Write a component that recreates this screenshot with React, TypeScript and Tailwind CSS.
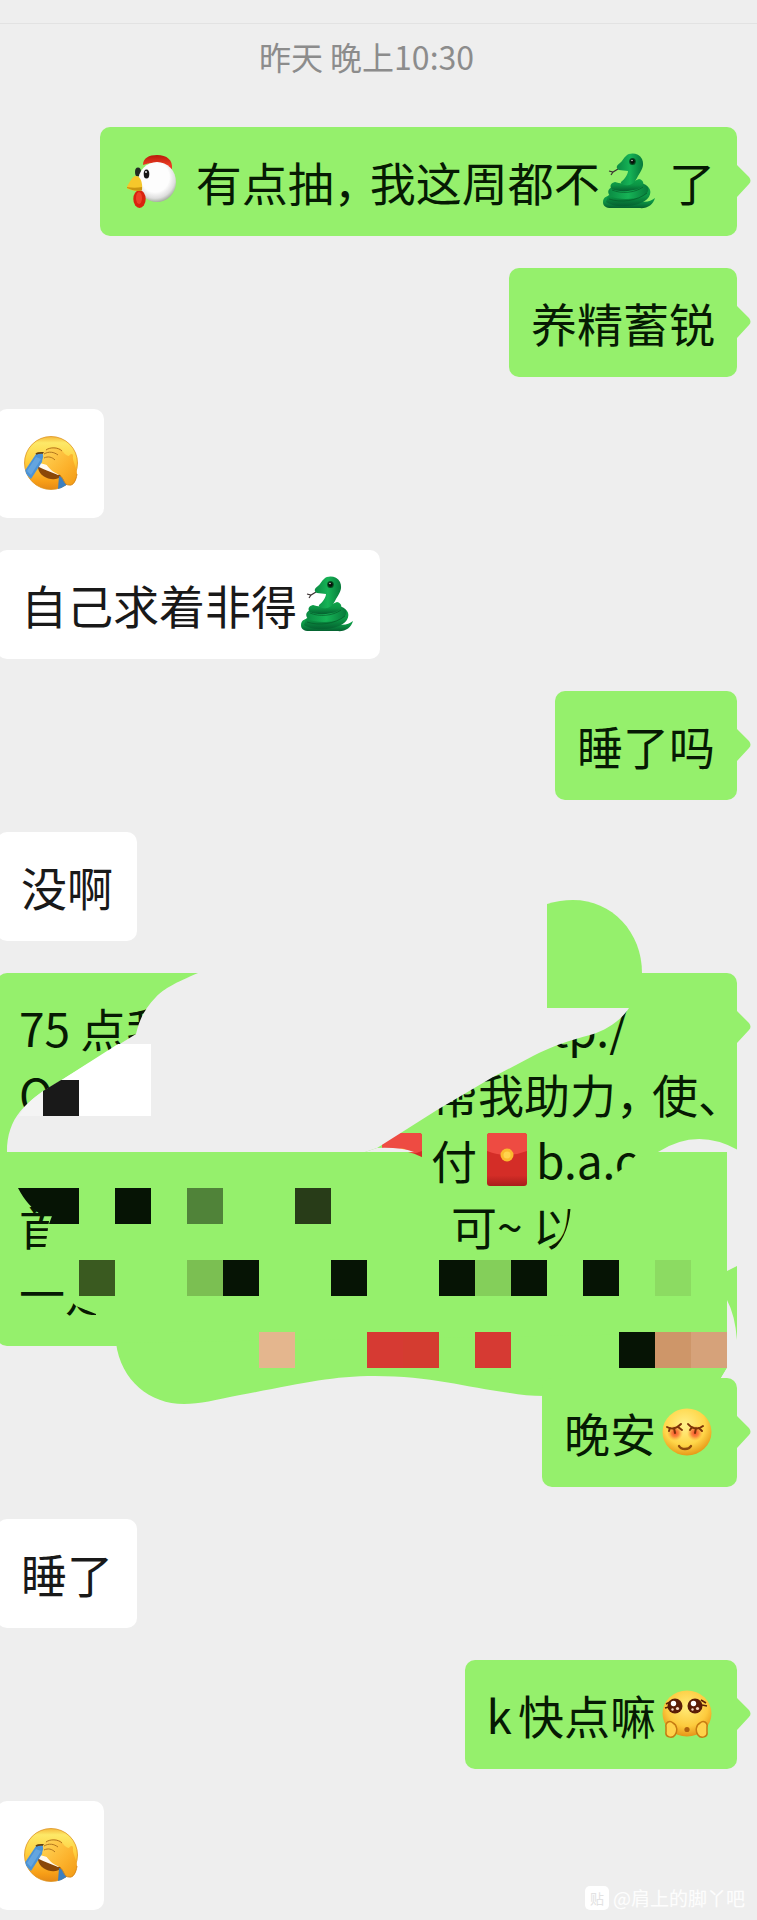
import type { ReactNode } from "react";

function Chicken() {
  return (
    <svg viewBox="0 0 50 54" className="h-[54px] w-[50px]" role="img" aria-label="鸡">
      <defs>
        <radialGradient id="ck-head" cx="0.45" cy="0.38" r="0.62">
          <stop offset="0.6" stopColor="#fdfdfd" />
          <stop offset="0.85" stopColor="#dedede" />
          <stop offset="1" stopColor="#a9b0a4" />
        </radialGradient>
        <linearGradient id="ck-comb" x1="0" y1="0" x2="0" y2="1">
          <stop offset="0" stopColor="#b81a0a" />
          <stop offset="0.7" stopColor="#ea3a22" />
        </linearGradient>
      </defs>
      <ellipse cx="11" cy="18" rx="3" ry="4.500" fill="#222b22" />
      <path d="M16 11 C16 4 22 1 30 1 C40 1 46 6 45 15 L38 13 C30 8 24 8 16 11Z" fill="url(#ck-comb)" />
      <ellipse cx="30" cy="28" rx="19" ry="20" fill="url(#ck-head)" />
      <ellipse cx="19.500" cy="20" rx="2.800" ry="4.500" fill="#161616" />
      <circle cx="19" cy="18" r="0.900" fill="#fff" />
      <ellipse cx="12.500" cy="45" rx="6.200" ry="9" fill="#d9230f" />
      <ellipse cx="12" cy="44" rx="3" ry="6" fill="#ee4028" />
      <path d="M8 22 C13 21 16 28 15 36 C10 38 4 36 -1 34 C2 30 4 24 8 22Z" fill="#f6c72b" />
      <path d="M0 33 C5 34 10 34 15 33 L15 36 C10 38 5 36 0 34Z" fill="#c99411" />
    </svg>
  );
}

function Snake() {
  return (
    <svg viewBox="0 0 52 56" className="h-14 w-[52px]" role="img" aria-label="蛇">
      <defs>
        <linearGradient id="sn-a" x1="0" y1="0" x2="0" y2="1">
          <stop offset="0" stopColor="#10a54c" />
          <stop offset="0.5" stopColor="#0b9544" />
          <stop offset="1" stopColor="#056030" />
        </linearGradient>
        <linearGradient id="sn-b" x1="0" y1="0" x2="1" y2="0">
          <stop offset="0" stopColor="#0b8b43" />
          <stop offset="0.5" stopColor="#16b356" />
          <stop offset="1" stopColor="#077a3a" />
        </linearGradient>
      </defs>
      <path d="M15 16 L10 19 L6 18 M10 19 L8 22" fill="none" stroke="#3c3232" strokeWidth="1.200" />
      <path d="M52 45 C50 52 44 56 36 55 L8 55 C3 55 0 53 0 49 C0 44 5 42 10 42 L36 48 C43 50 48 48 52 45Z" fill="url(#sn-a)" />
      <path d="M5 43 C8 40 22 44 32 42 C39 40 43 37 44 33 C50 37 48 46 38 50 C26 55 10 54 3 49Z" fill="url(#sn-a)" />
      <path d="M9 34 C16 36 28 35 39 30 L43 32 C47 35 46 40 40 43 C31 47 14 47 7 43 C4 39 5 36 9 34Z" fill="url(#sn-b)" />
      <path d="M12 29 C20 32 30 29 36 26 C41 27 42 32 37 35 C28 39 15 39 9 36 C6 33 8 30 12 29Z" fill="url(#sn-a)" />
      <path d="M23 3 C27 -1 36 0 39 6 C42 13 38 18 35 23 C33 27 31 31 26 32 C21 33 17 31 18 29 C22 26 25 21 25 18 L16 17 C12 15 14 12 17 10 C20 8 20 5 23 3Z" fill="url(#sn-b)" />
      <ellipse cx="29.500" cy="8.500" rx="3.300" ry="3.600" fill="#064a20" />
      <circle cx="29.500" cy="8.500" r="2.200" fill="#071009" />
      <circle cx="29" cy="7.500" r="0.700" fill="#fff" />
      <path d="M6 46 C18 50 34 48 44 40 M9 37 C18 41 32 40 40 34" fill="none" stroke="#045c2a" strokeWidth="1" opacity="0.700" />
    </svg>
  );
}

function Facepalm() {
  return (
    <svg viewBox="0 0 54 54" className="h-[54px] w-[54px]" role="img" aria-label="捂脸">
      <defs>
        <linearGradient id="fp-face" x1="0" y1="0" x2="0" y2="1">
          <stop offset="0" stopColor="#f5b93c" />
          <stop offset="0.120" stopColor="#fde968" />
          <stop offset="0.450" stopColor="#ffd140" />
          <stop offset="0.850" stopColor="#f79e17" />
          <stop offset="1" stopColor="#e58a16" />
        </linearGradient>
        <linearGradient id="fp-hand" x1="0" y1="0" x2="1" y2="1">
          <stop offset="0" stopColor="#ffd65a" />
          <stop offset="0.600" stopColor="#fcb22c" />
          <stop offset="1" stopColor="#f29a14" />
        </linearGradient>
        <clipPath id="fp-clip">
          <circle cx="27" cy="27" r="27" />
        </clipPath>
      </defs>
      <circle cx="27" cy="27" r="26.500" fill="url(#fp-face)" stroke="#dd931f" strokeWidth="0.800" />
      <g clipPath="url(#fp-clip)">
        <path d="M14 28 C22 29 31 34 38 39 C33 47 16 43 14 32Z" fill="#8a4708" />
        <path d="M15 27 C22 28 30 31 37 37 L34 39 C28 36 20 34 15 31Z" fill="#fffaf2" />
        <path d="M12 18 L20 17 L18 26 L7 43 L0 36Z" fill="#4b93d6" />
        <path d="M12 21 L3 35 L7 39 L17 23Z" fill="#6fade2" opacity="0.700" />
        <path d="M35 40 L42 43 L43 54 L34 53Z" fill="#3c7fc0" />
        <path d="M12 18 C15 16 18 17 21 17" fill="none" stroke="#624013" strokeWidth="1.800" />
      </g>
      <path d="M20 16 C22 11 32 10 37 13 C39 16 42 20 45 20 C46 18 49 17 49 20 C48 25 53 32 53 38 C52 46 49 50 45 49 C40 49 41 43 36 39 C29 37 24 31 22 28 C18 27 18 23 20 21 C18 19 19 17 20 16Z" fill="url(#fp-hand)" />
      <path d="M22 14 C26 11 34 11 38 15 M20 18 C25 15 30 16 34 19 M20 22 C24 20 28 21 31 24" fill="none" stroke="#a96c18" strokeWidth="0.900" />
      <path d="M36 39 C40 43 40 49 45 49 C49 50 52 45 53 38" fill="none" stroke="#d58518" strokeWidth="0.900" />
    </svg>
  );
}

function Shy() {
  return (
    <svg viewBox="-3 0 53 48" className="h-12 w-[53px]" role="img" aria-label="害羞">
      <defs>
        <radialGradient id="sh-face" cx="0.450" cy="0.350" r="0.650">
          <stop offset="0" stopColor="#fff08a" />
          <stop offset="0.650" stopColor="#ffd649" />
          <stop offset="1" stopColor="#e79a18" />
        </radialGradient>
        <radialGradient id="sh-blush">
          <stop offset="0" stopColor="#f4472a" />
          <stop offset="0.500" stopColor="#fa7838" stopOpacity="0.800" />
          <stop offset="1" stopColor="#ffb13c" stopOpacity="0" />
        </radialGradient>
      </defs>
      <ellipse cx="25" cy="24" rx="24.500" ry="23.500" fill="url(#sh-face)" />
      <circle cx="13" cy="25" r="8" fill="url(#sh-blush)" />
      <circle cx="33" cy="25" r="8" fill="url(#sh-blush)" />
      <path d="M5 19 C10 22 15 20 19 16 M8 20 L7 23 M12 20 L13 25 M16 19 L20 22 M26 16 C30 21 36 22 41 18 M30 19 L28 22 M34 20 L33 25 M37 20 L40 23" fill="none" stroke="#7d3408" strokeWidth="2" strokeLinecap="round" />
      <path d="M17 38 C19 42 27 42 29 38" fill="none" stroke="#8f4a0c" strokeWidth="2.400" strokeLinecap="round" />
    </svg>
  );
}

function Pleading() {
  return (
    <svg viewBox="-3 0 53 48" className="h-12 w-[53px]" role="img" aria-label="可怜">
      <defs>
        <radialGradient id="pl-face" cx="0.500" cy="0.350" r="0.650">
          <stop offset="0" stopColor="#ffec7a" />
          <stop offset="0.650" stopColor="#fdcb3e" />
          <stop offset="1" stopColor="#e69417" />
        </radialGradient>
      </defs>
      <ellipse cx="25" cy="23.500" rx="24.500" ry="23" fill="url(#pl-face)" />
      <path d="M4 14 L8 12 M3 18 L7 17 M39 10 L44 13 M40 15 L45 16" stroke="#5c2306" strokeWidth="1.600" />
      <circle cx="13" cy="16" r="7.500" fill="#5a1d06" />
      <circle cx="33" cy="16" r="7.500" fill="#5a1d06" />
      <circle cx="11.500" cy="13.500" r="2.700" fill="#fff" />
      <circle cx="15.500" cy="18.500" r="1.600" fill="#f7d9c2" />
      <circle cx="10.500" cy="19.500" r="1.200" fill="#f7d9c2" />
      <circle cx="31.500" cy="13.500" r="2.700" fill="#fff" />
      <circle cx="35.500" cy="18.500" r="1.600" fill="#f7d9c2" />
      <circle cx="30.500" cy="19.500" r="1.200" fill="#f7d9c2" />
      <ellipse cx="25" cy="39.500" rx="2.600" ry="2.600" fill="#b0620e" />
      <path d="M4 37 C3 32 8 30 11 33 C15 35 16 41 13 45 C10 49 3 47 4 42Z" fill="#ffd24a" stroke="#c67b12" strokeWidth="1.500" />
      <path d="M45 37 C46 32 41 30 38 33 C34 35 33 41 36 45 C39 49 46 47 45 42Z" fill="#ffd24a" stroke="#c67b12" strokeWidth="1.500" />
    </svg>
  );
}

function RedEnvelope() {
  return (
    <svg viewBox="0 0 40 54" className="h-[54px] w-10" role="img" aria-label="红包">
      <defs>
        <linearGradient id="env" x1="0" y1="0" x2="0" y2="1">
          <stop offset="0" stopColor="#d42d27" />
          <stop offset="0.800" stopColor="#d42d27" />
          <stop offset="1" stopColor="#a81e1b" />
        </linearGradient>
      </defs>
      <rect y="1" width="40" height="53" rx="3" fill="url(#env)" />
      <path d="M0 19 V4 Q0 1 3 1 H37 Q40 1 40 4 V19 Q20 27 0 19Z" fill="#ee4b42" />
      <circle cx="20" cy="23" r="6.500" fill="#fbb92e" />
      <circle cx="20" cy="23" r="3.500" fill="#ffd34d" />
    </svg>
  );
}

function Emoji({ children }: { children: ReactNode }) {
  return <span className="flex w-[59px] shrink-0 justify-center">{children}</span>;
}

function Comma() {
  return <span className="w-9 shrink-0 [font-feature-settings:'halt']">，</span>;
}

function Tail() {
  return (
    <svg viewBox="0 0 14 32" className="absolute top-[38px] left-full h-8 w-[14px]" aria-hidden="true">
      <path d="M0 0 L12 12 Q15 16 12 19 L0 32Z" fill="#95f06c" />
    </svg>
  );
}

function Sent({ children }: { children: ReactNode }) {
  return (
    <li className="relative mr-5 flex items-center self-end rounded-[10px] bg-[#95f06c] px-[22px] pt-[21px] pb-[22px] text-[#061a03]">
      {children}
      <Tail />
    </li>
  );
}

function Received({ children }: { children: ReactNode }) {
  return (
    <li className="-ml-[3px] flex items-center self-start rounded-[10px] bg-white px-6 pt-[21px] pb-[22px] text-[#191919]">
      {children}
    </li>
  );
}

const cells = [
  { x: 115, y: 215, fill: "#061405" },
  { x: 187, y: 215, fill: "#508339" },
  { x: 295, y: 215, fill: "#283c18" },
  { x: 79, y: 287, fill: "#3a5a20" },
  { x: 187, y: 287, fill: "#7bbf52" },
  { x: 223, y: 287, fill: "#061405" },
  { x: 331, y: 287, fill: "#061405" },
  { x: 439, y: 287, fill: "#061405" },
  { x: 475, y: 287, fill: "#84cf5a" },
  { x: 511, y: 287, fill: "#061405" },
  { x: 583, y: 287, fill: "#061405" },
  { x: 655, y: 287, fill: "#8cdb62" },
  { x: 259, y: 359, fill: "#e4b68e" },
  { x: 367, y: 359, fill: "#d63a33" },
  { x: 403, y: 359, fill: "#d43c30" },
  { x: 475, y: 359, fill: "#d63a33" },
  { x: 619, y: 359, fill: "#061405" },
  { x: 655, y: 359, fill: "#ce9669" },
  { x: 691, y: 359, fill: "#d6a27a" },
];

/* Brush strokes and mosaic cells painted over the long message. */
function Scribble() {
  return (
    <svg viewBox="0 0 757 440" className="absolute top-0 left-[3px] h-[440px] w-[757px] overflow-visible" aria-hidden="true">
      {/* lower brush stroke */}
      <path
        d="M116 370 C121 408 150 431 184 431 C200 431 215 427 240 422 C300 411 330 403 375 403 C430 403 465 414 510 420 Q525 423 545 423 H600 V405 H721 L727 395 V360Z"
        fill="#95f06c"
      />
      {/* upper grey stroke */}
      <path
        d="M198 0 C175 10 165 15 156 24 C144 36 139 48 136 61 L60 108 C25 128 7 145 7 179 H370 L377 175 L437 137 L493 104 L533 83 C550 74 570 67 590 62 C608 57 622 46 629 35 H547 V-1 H198Z"
        fill="#eeeeee"
      />
      <path d="M118 71 H151 V143 H43 V119 L60 108Z" fill="#fff" />
      <path d="M43 118 V143 H19 C25 132 32 126 43 118Z" fill="#f4f4f4" />
      <path d="M43 118 L61 107 H79 V143 H43Z" fill="#191919" />
      <path d="M547 -69 Q560 -73 573 -73 C612 -73 642 -41 642 0 V35 H547Z" fill="#95f06c" />
      {/* envelope cut-off */}
      <path d="M365 179 L377 175 Q402 174 424 185 V225 H365Z" fill="#95f06c" />
      <path d="M365 179 L377 175 Q400 174 414 179Z" fill="#eeeeee" />
      {/* letter o cut-off */}
      <path d="M613 202 L624 195 L636 182 L644 184 V214 H613Z" fill="#95f06c" />
      {/* right edge */}
      <path d="M658 179 Q697 154 738 177 V405 H721 L727 395 V179Z" fill="#eeeeee" />
      <path d="M727 298 L737 293 V367 Q735 342 727 327Z" fill="#95f06c" />
      {/* character cut-offs on the last two lines */}
      <path d="M571 228 H588 V284 H560 L553 277 Q570 262 571 228Z" fill="#95f06c" />
      <path d="M49 248 H72 V284 H44Z" fill="#95f06c" />
      <path d="M18 215 H79 V251 H49 L52 243 H43 C32 236 25 228 18 215Z" fill="#061405" />
      <path d="M64 290 H114 V346 H96 V341 L76 333 L71 328 H64Z" fill="#95f06c" />
      {cells.map((c) => (
        <rect key={`${c.x}-${c.y}`} x={c.x} y={c.y} width="36" height="36" fill={c.fill} />
      ))}
    </svg>
  );
}

function RedactedMessage() {
  return (
    <li className="relative mr-5 -ml-[3px] rounded-[10px] bg-[#95f06c] pt-[21px] pb-[22px] pl-[22px] text-[#061a03]">
      <p className="flex">
        <span className="w-[532px] shrink-0">75 点我</span>
        <span>tp./</span>
      </p>
      <p className="flex">
        <span className="w-[413px] shrink-0">O</span>
        <span>帮我助力</span>
        <Comma />
        <span>使</span>
        <span className="[font-feature-settings:'halt']">、</span>
      </p>
      <p className="flex items-center pl-[353px]">
        <Emoji>
          <RedEnvelope />
        </Emoji>
        <span>付</span>
        <Emoji>
          <RedEnvelope />
        </Emoji>
        <span>b.a.o</span>
      </p>
      <p className="flex">
        <span className="w-[432px] shrink-0">首</span>
        <span>可~ 以</span>
      </p>
      <p>一定</p>
      <Scribble />
      <Tail />
    </li>
  );
}

export default function App() {
  return (
    <main className="relative flow-root min-h-screen overflow-hidden bg-[#eeeeee] pb-[10px] font-['Noto_Sans_CJK_SC',sans-serif]">
      <header className="h-6 border-b border-[#e2e2e2]" />
      <p className="mt-2 mb-[47px] pr-6 text-center text-[32px] leading-[48px] text-[#8c8c8c]">
        <time>昨天 晚上10:30</time>
      </p>
      <ol className="flex flex-col gap-8 text-[46px] leading-[66px] whitespace-pre">
        <Sent>
          <Emoji>
            <Chicken />
          </Emoji>
          <span className="pl-1"> 有点抽</span>
          <Comma />
          <span>我这周都不</span>
          <Emoji>
            <Snake />
          </Emoji>
          <span> 了</span>
        </Sent>
        <Sent>养精蓄锐</Sent>
        <Received>
          <span className="flex h-[66px] items-center">
            <Emoji>
              <Facepalm />
            </Emoji>
          </span>
        </Received>
        <Received>
          <span>自己求着非得</span>
          <Emoji>
            <Snake />
          </Emoji>
        </Received>
        <Sent>睡了吗</Sent>
        <Received>没啊</Received>
        <RedactedMessage />
        <Sent>
          <span>晚安</span>
          <Emoji>
            <Shy />
          </Emoji>
        </Sent>
        <Received>睡了</Received>
        <Sent>
          <span className="pr-1.5">k</span>
          <span>快点嘛</span>
          <Emoji>
            <Pleading />
          </Emoji>
        </Sent>
        <Received>
          <span className="flex h-[66px] items-center">
            <Emoji>
              <Facepalm />
            </Emoji>
          </span>
        </Received>
      </ol>
      <footer className="absolute right-3 bottom-2 flex items-center gap-1 text-[19px] leading-[28px] text-white/90">
        <span className="flex h-6 w-6 items-center justify-center rounded-[5px] bg-white text-[14px] leading-6 text-[#e2e2e2]">贴</span>
        <span>@肩上的脚丫吧</span>
      </footer>
    </main>
  );
}
